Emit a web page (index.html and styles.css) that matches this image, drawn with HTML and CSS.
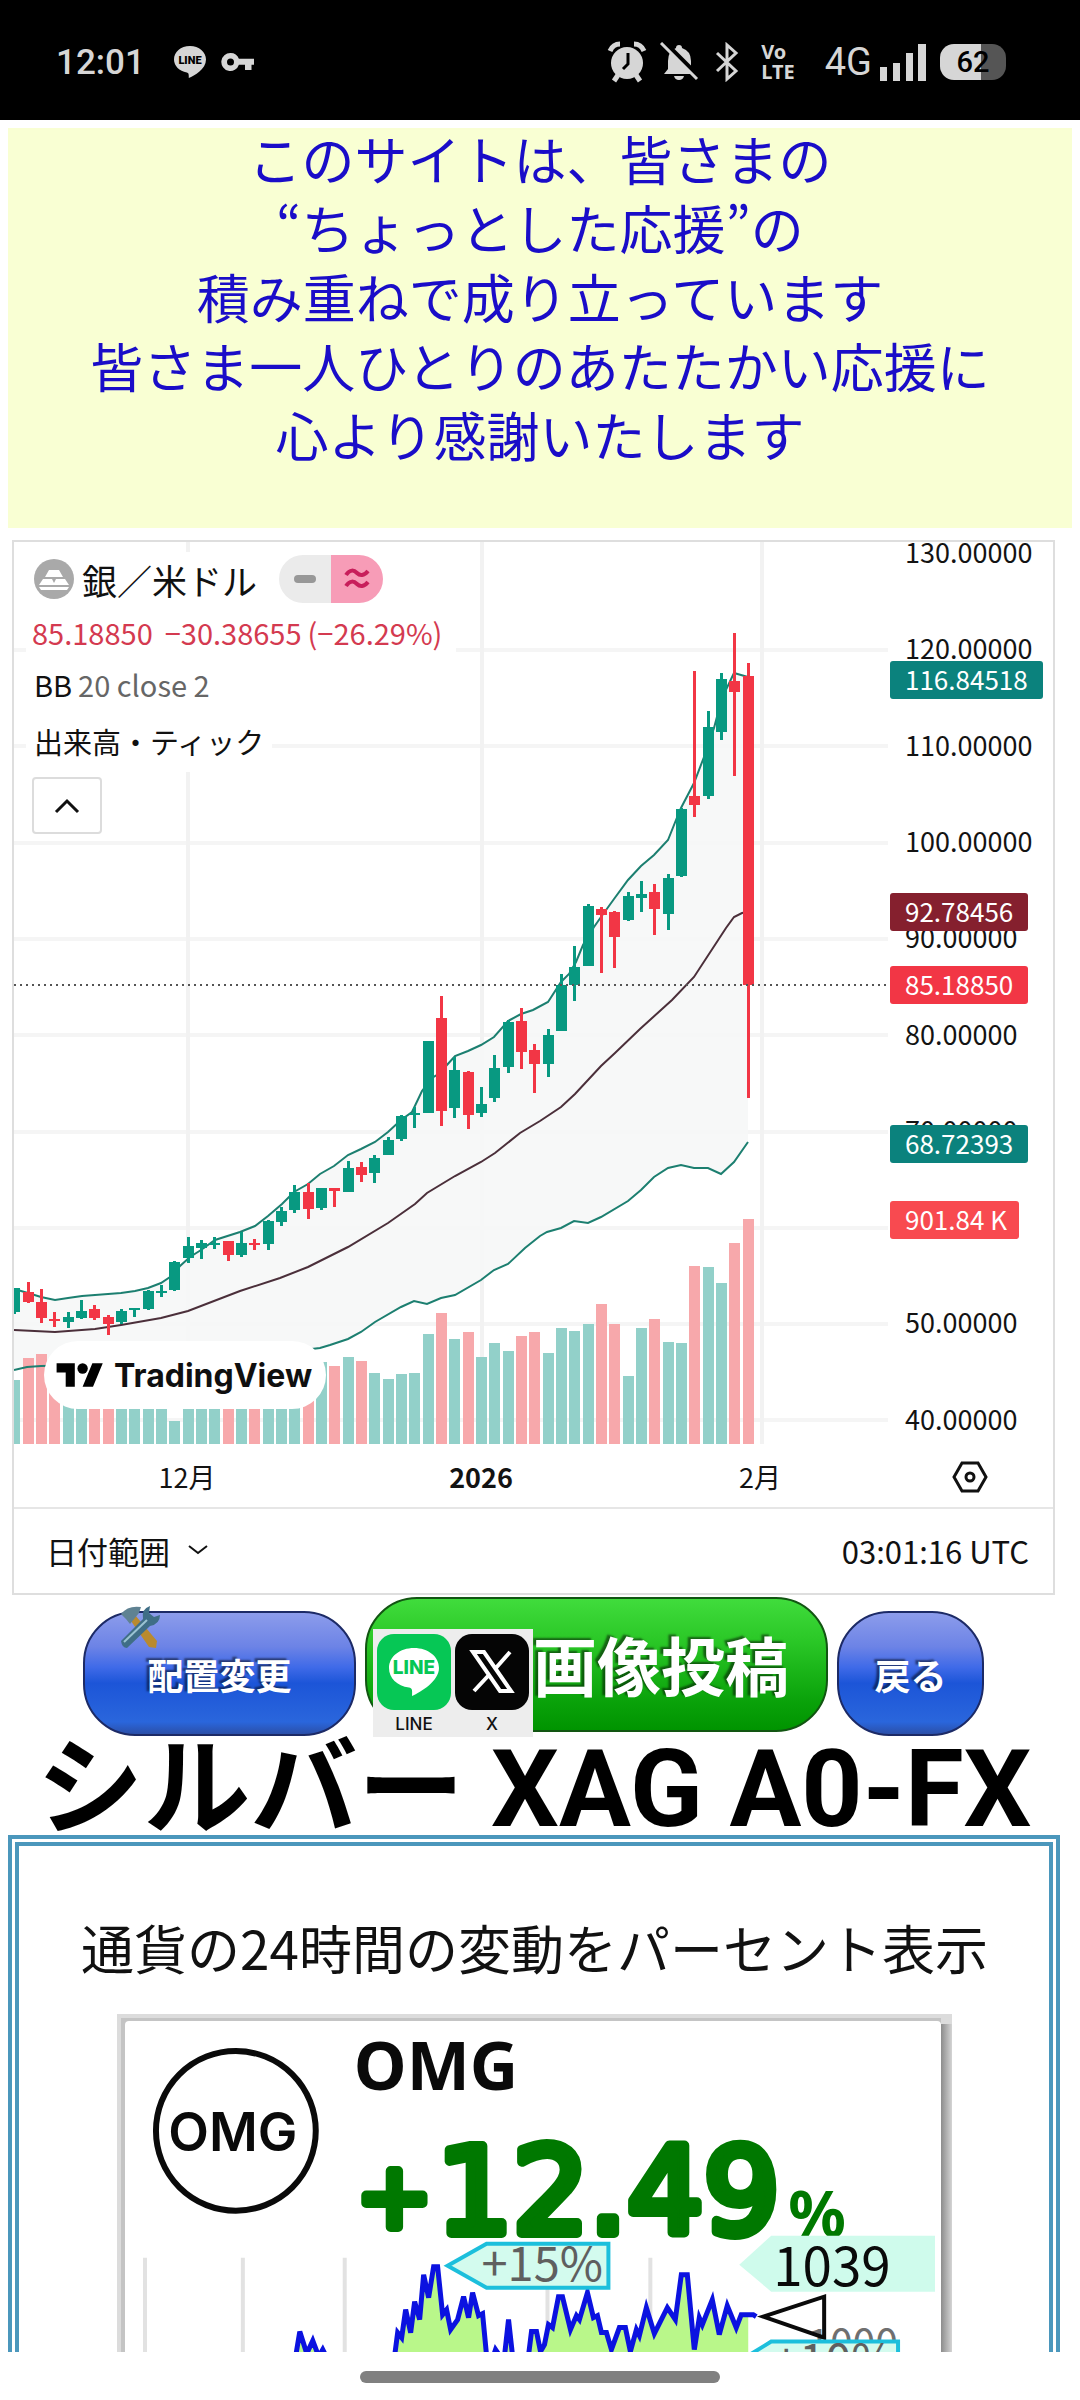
FILE: index.html
```html
<!DOCTYPE html>
<html lang="ja">
<head>
<meta charset="utf-8">
<meta name="viewport" content="width=device-width, initial-scale=1">
<title>シルバー XAG A0-FX</title>
<link rel="stylesheet" href="styles.css">
</head>
<body>
<div class="screen">
  <header class="status">
    <div class="status-group">
      <span class="clock">12:01</span>
      <svg class="ic-line" width="34" height="34" viewBox="0 0 34 34"><path d="M17 1C7.600 1 1 7 1 14.500c0 6.500 5.400 11.600 12.800 12.900 1.600.4 2.200 1.400 2 5.600 5.500-2.400 17.200-8.500 17.200-18.500C33 7 26 1 17 1z" fill="#d6d6d6"/><text x="17" y="19" class="line-mini">LINE</text></svg>
      <svg width="34" height="20" viewBox="0 0 34 20" fill="#d6d6d6"><path fill-rule="evenodd" d="M9.500 1a9 9 0 0 1 8.400 5.700H33v6h-2.500V18H24v-5.300h-6.100A9 9 0 1 1 9.500 1zm0 5.500a3.500 3.500 0 1 0 0 7 3.500 3.500 0 0 0 0-7z"/></svg>
    </div>
    <div class="status-group status-right">
      <svg width="40" height="42" viewBox="0 0 40 42"><circle cx="20" cy="22" r="16" fill="#d6d6d6"/><path d="M3 10q3-7 10-7M37 10q-3-7-10-7M11 34l-4 6M29 34l4 6" stroke="#d6d6d6" stroke-width="5" fill="none"/><path d="M21 12v11l-5 5" stroke="#000" stroke-width="3" fill="none"/></svg>
      <svg width="40" height="40" viewBox="0 0 40 40"><path d="M20 3q3 0 3 3 9 3 9 13v9l4 4H5l4-5v-8Q9 9 17 6q0-3 3-3zM15 34h10q-1 4-5 4t-5-4z" fill="#d6d6d6"/><path d="M5 0l35 35" stroke="#000" stroke-width="5"/><path d="M2 1l36 36" stroke="#d6d6d6" stroke-width="3"/></svg>
      <svg class="ic-bt" width="24" height="40" viewBox="0 0 24 40"><path d="M2 11l19 18-9 8V3l9 8L2 29" fill="none" stroke="#d6d6d6" stroke-width="3"/></svg>
      <span class="volte"><span>Vo</span><span>LTE</span></span>
      <span class="net">4G</span>
      <svg class="ic-sig" width="48" height="38" viewBox="0 0 48 38" fill="#d6d6d6"><path d="M0 24h7v14H0zM13 20h7v18h-7zM26 10h7v28h-7zM38 1h8v37h-8z"/></svg>
      <span class="battery"><span class="battery-level">62</span></span>
    </div>
  </header>

  <main class="page">
    <section class="banner">
      <p class="banner-text">このサイトは、皆さまの<br>“ちょっとした応援”の<br>積み重ねで成り立っています<br>皆さま一人ひとりのあたたかい応援に<br>心より感謝いたします</p>
    </section>

    <section class="widget">
      <div class="plot">
        <svg id="chart" class="chart" viewBox="14 542 1039 965"></svg>
        <div class="legend">
          <div class="legend-row row-symbol">
            <svg width="40" height="40" viewBox="0 0 40 40"><circle cx="20" cy="20" r="20" fill="#a9a9a9"/><path d="M15 11h10l4 7H11zM9 20h9l3 6H5zM22 20h9l4 6H19zM5 28h30l-2 3H7z" fill="#fff"/></svg>
            <h2 class="symbol">銀／米ドル</h2>
            <span class="chips">
              <span class="chip chip-grey"><span class="dash"></span></span>
              <span class="chip chip-pink"><svg width="26" height="22" viewBox="0 0 26 22"><path d="M2 7c4-6 8-5 11-2s7 3 11-2M2 18c4-6 8-5 11-2s7 3 11-2" fill="none" stroke="#c81e5b" stroke-width="4"/></svg></span>
            </span>
          </div>
          <div class="legend-row row-price"><span>85.18850</span><span>−30.38655</span><span class="pct">(−26.29%)</span></div>
          <div class="legend-row row-study"><b class="study">BB</b><span>20 close 2</span></div>
          <div class="legend-row row-volume">出来高・ティック</div>
          <button class="collapse" type="button" aria-label="凡例を閉じる"><svg width="26" height="16" viewBox="0 0 26 16"><path d="M2 14L13 3l11 11" fill="none" stroke="#111" stroke-width="3"/></svg></button>
        </div>
        <a class="tv" href="#tradingview">
          <svg width="48" height="26" viewBox="0 3 36 20"><path d="M14 22H7V11H0V4h14v18zM28 22h-8l7.500-18h8L28 22z"/><circle cx="20" cy="8" r="4"/></svg>
          <span>TradingView</span>
        </a>
      </div>
      <div class="toolbar">
        <button class="range" type="button">日付範囲
          <svg width="20" height="10" viewBox="0 0 20 10"><path d="M1 1l9 7 9-7" fill="none" stroke="#111" stroke-width="2"/></svg>
        </button>
        <span>03:01:16 UTC</span>
      </div>
    </section>

    <nav class="actions">
      <button class="btn btn-blue btn-layout" type="button">配置変更
        <svg class="tools" width="42" height="44" viewBox="0 0 42 44"><path d="M16 10L38 36l-1 7-7-1L12 16z" fill="#b98a2e"/><path d="M2 9Q9 0 22 2l-2 6-9 11-4-5z" fill="#5f8292"/><path d="M2 36l22-22q-2-10 7-13l-1 7 5 4 6-2q0 9-10 11L8 43q-5 0-6-7z" fill="#3f6e86"/><path d="M5 37l23-22" stroke="#9ac3d2" stroke-width="2"/></svg>
      </button>
      <button class="btn btn-green" type="button">画像投稿
        <span class="share">
          <span class="app">
            <svg width="74" height="76" viewBox="0 0 74 76"><rect width="74" height="76" rx="17" fill="#06c755"/><path d="M37 14c-14 0-25 8.500-25 20 0 10 8 18 20 19.500 3 .5 3.500 2 3 8.500 9-4 27-15 27-28 0-11.500-11-20-25-20z" fill="#fff"/><text x="37" y="40" class="line-logo">LINE</text></svg>
            <span>LINE</span>
          </span>
          <span class="app">
            <svg width="74" height="76" viewBox="0 0 74 76"><rect width="74" height="76" rx="17" fill="#050505"/><path d="M18 18h11l27 39H45zM55 18L40 35M33 42L19 57" fill="none" stroke="#fff" stroke-width="4"/></svg>
            <span>X</span>
          </span>
        </span>
      </button>
      <button class="btn btn-blue btn-back" type="button">戻る</button>
    </nav>

    <h1 class="title">シルバー XAG A0-FX</h1>

    <section class="change">
      <p class="lead">通貨の24時間の変動をパーセント表示</p>
      <svg class="card" viewBox="117 2014 836 400">
        <defs><linearGradient id="edge"><stop offset="0" stop-color="#8c8c8c"/><stop offset="1" stop-color="#d4d4d4"/></linearGradient></defs>
        <path d="M117 2014h836v400H117z" fill="#dcdcdc"/>
        <path d="M942 2024h11v390h-11z" fill="url(#edge)"/>
        <path d="M121 2018h821v396H121z" fill="#c4c4c4"/>
        <rect x="125" y="2021" width="817" height="400" rx="4" fill="#fff"/>
        <circle cx="236" cy="2131" r="80" fill="none" stroke="#0a0a0a" stroke-width="6"/>
        <text x="233" y="2151" class="coin">OMG</text>
        <text x="354" y="2090" class="ticker">OMG</text>
        <text x="437" y="2233" class="gain"><tspan class="gain-sign" x="357" y="2227">+</tspan><tspan x="437" y="2233">12.49</tspan></text>
        <text x="789" y="2237" class="gain-unit">%</text>
        <path d="M145 2258v142M243 2258v142M345 2258v142M548 2258v142M651 2258v142" stroke="#e2e2e2" stroke-width="4"/>
        <path d="M296 2356l4-24 7 22 6-13 6 16 4-7 3 6zM395 2356l3-23 4 5 4-28 5 23 4-31 5 18 4-45 5 23 5-31h4l5 48 4-5 4 20 7-10 6-23 5 21 4-25 6 23 4-2 4 42zM505 2356l4-36 4 36zM529 2356l3-24h5l4 20 4-7 4-20 4 3 6-31h4l8 33 6-14 3 4 8-27 6 25 4-2 4 17h5l5 17 8-22h6l5 24 6-22 3 6 7-28 8 26 13-26 8 12 6-45h6l7 75 5-32 3 7 10-25 7 35 8-29 9 22 5-13h7v39z" fill="#b9f78a"/>
        <path d="M296 2356l4-24 7 22 6-13 6 16 4-7 3 6M395 2356l3-23 4 5 4-28 5 23 4-31 5 18 4-45 5 23 5-31h4l5 48 4-5 4 20 7-10 6-23 5 21 4-25 6 23 4-2 4 42M494 2356l2-6 4 6M505 2356l4-36 4 36M529 2356l3-24h5l4 20 4-7 4-20 4 3 6-31h4l8 33 6-14 3 4 8-27 6 25 4-2 4 17h5l5 17 8-22h6l5 24 6-22 3 6 7-28 8 26 13-26 8 12 6-45h6l7 75 5-32 3 7 10-25 7 35 8-29 9 22 5-13h12l3 2" fill="none" stroke="#0b12e0" stroke-width="5"/>
        <path d="M448 2266l39-22h122v44H487z" fill="#d3fbee" stroke="#1cbfdc" stroke-width="4"/>
        <text x="482" y="2281" class="tag-text">+15%</text>
        <path d="M740 2265l32-29h164v56H772z" fill="#cffbec"/>
        <text x="774" y="2286" class="price">1039</text>
        <text x="808" y="2359" class="ghost">1000</text>
        <path d="M764 2317l61-20v41z" fill="none" stroke="#0a0a0a" stroke-width="4"/>
        <path d="M736 2364l36-22h127v44H772z" fill="#d3fbee" stroke="#1cbfdc" stroke-width="4"/>
        <text x="774" y="2378" class="tag-text">+10%</text>
      </svg>
    </section>
  </main>

  <footer class="navbar"><span class="handle"></span></footer>
</div>
<script src="chart.js"></script>
</body>
</html>
```
FILE: styles.css
```css
* { box-sizing: border-box; }

body {
  margin: 0;
  background: #fff;
  color: #111;
  font-family: "Noto Sans CJK JP", sans-serif;
}

button { font: inherit; color: inherit; cursor: pointer; }

.screen {
  display: flex;
  flex-direction: column;
  height: 100vh;
}

/* Status bar */
.status {
  flex: none;
  display: flex;
  justify-content: space-between;
  align-items: center;
  height: 120px;
  padding: 4px 74px 0 56px;
  background: #000;
  color: #d6d6d6;
  font-family: Roboto, sans-serif;
  font-weight: 500;
}
.status-group { display: flex; align-items: center; }
.clock { font-size: 35px; }
.ic-line { margin: 0 14px 0 28px; }
.line-mini { font: 900 11px Roboto, sans-serif; text-anchor: middle; fill: #000; }
.status-right { gap: 12px; }
.ic-bt { margin: 0 10px 0 4px; }
.volte {
  display: flex;
  flex-direction: column;
  font: 700 20px/20px "Noto Sans", sans-serif;
}
.net { margin-left: 18px; font-size: 38px; font-weight: 400; }
.ic-sig { margin-left: -4px; }
.battery {
  width: 66px;
  border-radius: 14px;
  background: linear-gradient(90deg, #d6d6d6 62%, #555 62%);
}
.battery-level {
  display: block;
  font-size: 29px;
  line-height: 36px;
  text-align: center;
  color: #000;
}

/* Scrolling page */
.page { flex: 1; min-height: 0; overflow: hidden; padding-top: 8px; }

.banner {
  display: flex;
  justify-content: center;
  min-height: 400px;
  margin: 0 8px 12px;
  background: #f9ffd3;
}
.banner-text {
  margin: -4px 0 0;
  color: #1a0dc8;
  font-size: 53px;
  line-height: 69px;
  text-align: center;
}

/* Chart widget */
.widget {
  margin: 0 25px 0 12px;
  border: 2px solid #dedede;
  background: #fff;
}
.plot { position: relative; }
.chart { display: block; width: 100%; }
.chart .axis { font-size: 27px; fill: #131313; }
.chart .axis-mid { text-anchor: middle; }
.chart .axis-bold { font-weight: 700; }
.chart .tag { font-size: 26px; fill: #fff; }

.legend {
  position: absolute;
  left: 12px;
  top: 10px;
  display: flex;
  flex-direction: column;
  align-items: flex-start;
}
.legend-row {
  display: flex;
  align-items: center;
  height: 52px;
  padding: 0 8px;
  background: #fff;
  font-size: 29px;
}
.row-symbol { height: 54px; gap: 8px; }
.symbol { margin: 0; font-size: 35px; font-weight: 400; }
.chips { display: flex; height: 48px; margin-left: 14px; border-radius: 24px; overflow: hidden; }
.chip { display: flex; align-items: center; justify-content: center; width: 52px; }
.chip-grey { background: #ebebeb; }
.chip-pink { background: #f79cb7; }
.dash { width: 22px; height: 8px; border-radius: 4px; background: #989898; }
.row-price { padding: 0 14px 0 6px; color: #d43a50; gap: 12px; }
.pct { margin-left: -6px; }
.row-study { gap: 6px; color: #666; }
.study { font-weight: 400; color: #111; }
.row-volume { height: 62px; font-size: 29px; }
.collapse {
  display: flex;
  align-items: center;
  justify-content: center;
  width: 70px;
  height: 57px;
  margin: 5px 0 0 6px;
  padding: 0;
  border: 2px solid #dcdcdc;
  border-radius: 4px;
  background: #fff;
}

.tv {
  position: absolute;
  left: 30px;
  bottom: 98px;
  display: flex;
  align-items: center;
  gap: 10px;
  height: 68px;
  padding: 0 14px 0 12px;
  border-radius: 34px;
  background: #fff;
  color: #0f0f0f;
  font: 700 32px Inter, sans-serif;
  text-decoration: none;
}

.toolbar {
  display: flex;
  justify-content: space-between;
  align-items: center;
  height: 86px;
  padding: 0 24px 2px 32px;
  border-top: 2px solid #e6e6e6;
  font-size: 31px;
}
.range {
  display: flex;
  align-items: center;
  gap: 18px;
  padding: 0;
  border: 0;
  background: none;
}

/* Action buttons */
.actions {
  display: flex;
  justify-content: center;
  align-items: flex-end;
  gap: 9px;
  margin: 2px 0 0;
  padding-right: 13px;
}
.btn {
  position: relative;
  padding: 0;
  border: 2px solid #1c2a66;
  border-radius: 52px;
  color: #fff;
  font-weight: 700;
  text-shadow: -3px -2px 2px rgba(0, 0, 0, .5);
}
.btn-blue {
  height: 125px;
  font-size: 36px;
  background: linear-gradient(#8c9ceb, #6c83e6 28%, #3f6ae8 45%, #1c55d8 58%, #2a66dc 90%, #2b4fa8);
}
.btn-layout { width: 273px; }
.btn-back { width: 147px; }
.btn-green {
  width: 463px;
  height: 135px;
  margin-bottom: 4px;
  padding: 0 0 4px 166px;
  border-color: #125512;
  font-size: 64px;
  text-align: left;
  background: linear-gradient(#40dc3c, #2cc928 30%, #0aa20a 78%, #009400);
}
.tools { position: absolute; left: 34px; top: -8px; }
.share {
  position: absolute;
  left: 6px;
  top: 30px;
  display: flex;
  gap: 4px;
  padding: 5px 4px 0;
  background: #ededed;
  color: #111;
  font: 500 17px/25px Inter, sans-serif;
  text-shadow: none;
}
.app { display: flex; flex-direction: column; align-items: center; gap: 2px; }
.line-logo { font: 800 19px Inter, sans-serif; text-anchor: middle; fill: #06c755; }

.title {
  margin: 0;
  padding-right: 12px;
  height: 99px;
  font: 700 107px/108px Roboto, "Noto Sans CJK JP", sans-serif;
  text-align: center;
  white-space: nowrap;
  color: #000;
}

/* 24h change */
.change {
  margin: 0 20px 0 8px;
  padding: 62px 97px 0 98px;
  border: 11px double #4b97bc;
}
.lead {
  margin: 0 -60px 28px;
  font-size: 53px;
  line-height: 78px;
  text-align: center;
}
.card { display: block; width: 100%; }
.coin { font: 600 53px Inter, sans-serif; text-anchor: middle; fill: #0a0a0a; }
.ticker { font: 700 67px "Noto Sans", sans-serif; fill: #0a0a0a; }
.gain {
  font: 400 120px "DejaVu Sans", sans-serif;
  fill: #007800;
  stroke: #007800;
  stroke-width: 10;
  stroke-linejoin: round;
}
.gain-sign { font-size: 90px; }
.gain-unit { font: 700 64px "Noto Sans", sans-serif; fill: #007800; }
.tag-text { font-size: 47px; fill: #5f5f5f; }
.price { font-size: 53px; fill: #0a0a0a; }
.ghost { font-size: 41px; fill: #6f6f6f; }

/* Gesture bar */
.navbar {
  flex: none;
  display: flex;
  justify-content: center;
  align-items: center;
  height: 48px;
  padding-top: 2px;
  background: #fff;
}
.handle { width: 360px; height: 12px; border-radius: 6px; background: #808080; }
```
FILE: chart.js
```js
// Daily candles: [direction, body top, body bottom, high, low, volume top]
const candles = [
  ['u', 1288, 1312, 1288, 1314, 1380], ['d', 1292, 1302, 1282, 1303, 1358],
  ['d', 1302, 1318, 1289, 1323, 1354], ['d', 1319, 1321, 1312, 1327, 1378],
  ['u', 1317, 1322, 1312, 1328, 1384], ['u', 1311, 1318, 1300, 1319, 1386],
  ['d', 1309, 1318, 1305, 1320, 1384], ['d', 1317, 1324, 1315, 1335, 1380],
  ['u', 1311, 1322, 1309, 1324, 1390], ['u', 1308, 1310, 1308, 1317, 1392],
  ['u', 1291, 1309, 1290, 1310, 1388], ['u', 1291, 1293, 1285, 1297, 1386],
  ['u', 1262, 1290, 1261, 1291, 1421], ['u', 1246, 1258, 1237, 1263, 1384],
  ['u', 1243, 1248, 1240, 1259, 1388], ['u', 1243, 1245, 1237, 1249, 1390],
  ['d', 1241, 1255, 1241, 1261, 1386], ['u', 1243, 1255, 1232, 1257, 1384],
  ['d', 1243, 1245, 1239, 1250, 1388], ['u', 1221, 1244, 1220, 1250, 1384],
  ['u', 1211, 1222, 1207, 1226, 1382], ['u', 1192, 1210, 1185, 1213, 1380],
  ['d', 1192, 1209, 1183, 1219, 1378], ['u', 1188, 1208, 1188, 1210, 1362],
  ['d', 1188, 1191, 1188, 1207, 1366], ['u', 1168, 1192, 1161, 1192, 1357],
  ['d', 1167, 1175, 1162, 1182, 1361], ['u', 1158, 1173, 1155, 1183, 1373],
  ['u', 1140, 1155, 1137, 1155, 1379], ['u', 1116, 1139, 1115, 1141, 1374],
  ['u', 1113, 1115, 1107, 1128, 1373], ['u', 1041, 1113, 1041, 1113, 1334],
  ['d', 1018, 1111, 996, 1126, 1313], ['u', 1070, 1108, 1057, 1118, 1339],
  ['d', 1072, 1115, 1071, 1129, 1332], ['u', 1104, 1113, 1087, 1117, 1357],
  ['u', 1068, 1098, 1055, 1102, 1343], ['u', 1022, 1067, 1020, 1073, 1351],
  ['d', 1021, 1052, 1008, 1069, 1336], ['d', 1050, 1064, 1044, 1093, 1332],
  ['u', 1035, 1064, 1029, 1077, 1353], ['u', 985, 1031, 974, 1031, 1328],
  ['u', 967, 985, 946, 1001, 1331], ['u', 906, 966, 904, 966, 1324],
  ['d', 909, 915, 907, 973, 1304], ['d', 912, 937, 911, 968, 1324],
  ['u', 896, 920, 892, 921, 1376], ['u', 894, 898, 881, 912, 1328],
  ['d', 892, 909, 884, 935, 1319], ['u', 878, 914, 874, 930, 1342],
  ['u', 809, 876, 808, 877, 1343], ['d', 796, 805, 671, 817, 1266],
  ['u', 727, 796, 711, 799, 1267], ['u', 679, 732, 673, 740, 1283],
  ['d', 681, 692, 633, 776, 1243], ['d', 676, 985, 663, 1098, 1219]
];

// Bollinger bands
const upper = '14,1289 28,1293 41,1297 55,1300 68,1298 82,1296 95,1295 121,1293 135,1291 148,1288 161,1283 170,1277 180,1266 190,1257 201,1250 215,1240 240,1232 255,1226 268,1216 282,1204 294,1192 308,1184 320,1174 334,1166 348,1155 361,1149 375,1142 388,1132 401,1120 412,1112 422,1091 432,1078 440,1073 446,1066 455,1056 468,1051 481,1045 494,1037 508,1021 521,1014 533,1010 548,1002 561,982 569,974 576,962 583,945 594,927 601,917 614,899 628,880 641,866 654,855 668,840 676,820 681,808 694,783 704,757 714,728 722,698 734,673 748,677';
const middle = '14,1330 55,1332 95,1329 121,1325 161,1318 188,1311 240,1291 280,1278 308,1267 348,1247 388,1223 415,1204 427,1193 455,1176 481,1162 495,1153 520,1133 540,1121 561,1107 575,1094 601,1066 615,1053 640,1029 672,1000 694,977 726,928 734,917 742,913 748,912';
const lower = '14,1370 27,1367 41,1366 200,1362 320,1348 330,1345 348,1339 361,1332 375,1322 401,1307 414,1301 427,1304 441,1298 455,1295 481,1280 494,1270 508,1264 525,1248 540,1236 547,1232 561,1228 574,1221 588,1223 601,1217 628,1201 641,1190 654,1177 668,1168 681,1165 694,1168 708,1168 721,1174 734,1162 748,1142';

const up = '#089981';
const down = '#f23645';
const out = [];

// Price grid, 10.00000 per step
for (let i = 0; i < 9; i++) {
  const y = Math.round(650 + i * 96.3);
  out.push(`<path d="M14 ${y}H888" stroke="#f5f5f5" stroke-width="4"/>`);
}
out.push('<path d="M188 542V1444M482 542V1444M762 542V1444" stroke="#f2f2f2" stroke-width="4"/>');

out.push(`<polygon points="${upper} ${lower.split(' ').reverse().join(' ')}" fill="#f6f7f7" fill-opacity=".9"/>`);

candles.forEach((c, i) => {
  const x = Math.round(14.3 + i * 13.333);
  const fill = c[0] === 'u' ? '#92d0c9' : '#f7a8ab';
  out.push(`<rect x="${x - 5}" y="${c[5]}" width="11" height="${1444 - c[5]}" fill="${fill}"/>`);
});

[[upper, '#1c7f70'], [middle, '#4b2f3a'], [lower, '#1c7f70']].forEach(([pts, stroke]) => {
  out.push(`<polyline points="${pts}" fill="none" stroke="${stroke}" stroke-width="2"/>`);
});

candles.forEach((c, i) => {
  const x = Math.round(14.3 + i * 13.333);
  const fill = c[0] === 'u' ? up : down;
  out.push(`<path d="M${x - 5} ${c[1]}h11V${c[2]}h-11zM${x - 1} ${c[3]}h3V${c[4]}h-3z" fill="${fill}"/>`);
});

out.push('<path d="M14 985H888" stroke="#555" stroke-width="2" stroke-dasharray="2 4"/>');

for (let i = 0; i < 10; i++) {
  if (i === 7) continue;
  const price = (130 - i * 10).toFixed(5);
  out.push(`<text class="axis" x="905" y="${Math.round(563 + i * 96.3)}">${price}</text>`);
}

[
  ['116.84518', 680, 153, '#0b827d'], ['92.78456', 912, 138, '#85202e'],
  ['85.18850', 985, 138, down], ['68.72393', 1144, 138, '#0b827d'],
  ['901.84 K', 1220, 129, '#f84a50']
].forEach(([label, y, w, fill]) => {
  out.push(`<rect x="890" y="${y - 19}" width="${w}" height="38" rx="3" fill="${fill}"/>`);
  out.push(`<text class="tag" x="905" y="${y + 10}">${label}</text>`);
});

out.push('<text class="axis axis-mid" x="187" y="1488">12月</text>');
out.push('<text class="axis axis-mid axis-bold" x="481" y="1488">2026</text>');
out.push('<text class="axis axis-mid" x="760" y="1488">2月</text>');
out.push('<path d="M962 1463h16l8 14-8 14h-16l-8-14z" fill="none" stroke="#111" stroke-width="3"/>');
out.push('<circle cx="970" cy="1477" r="4" fill="none" stroke="#111" stroke-width="3"/>');

document.getElementById('chart').innerHTML = out.join('');
```
